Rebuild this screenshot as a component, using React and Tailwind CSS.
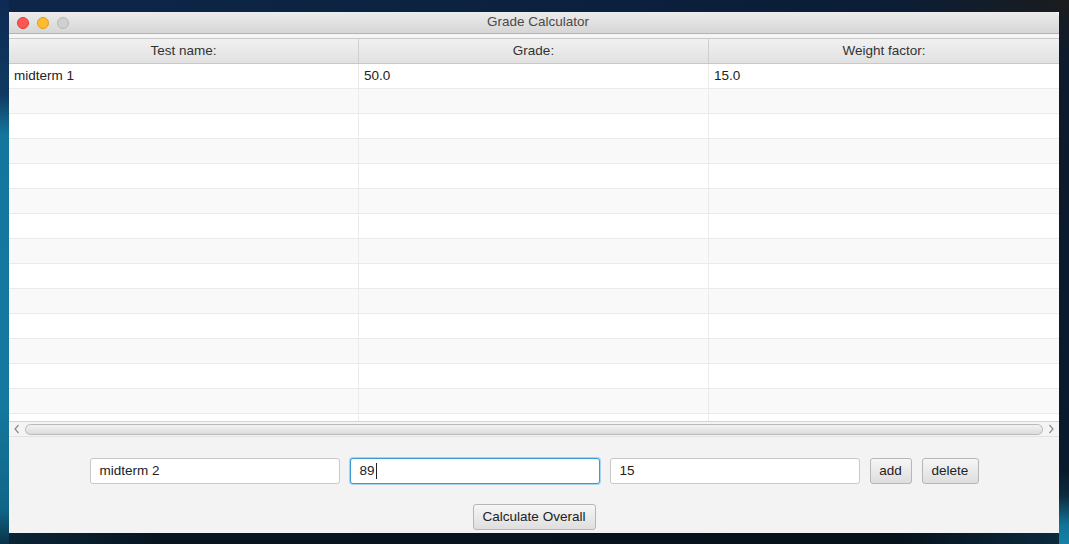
const ROWS = [
  ['midterm 1', '50.0', '15.0'],
  ...Array.from({ length: 14 }, () => ['', '', '']),
]

const HEADERS = ['Test name:', 'Grade:', 'Weight factor:']

function TextField({ value, focused }) {
  return (
    <div
      className={
        focused
          ? 'w-[250px] h-[26px] bg-white rounded-[3px] border border-[#3b99d6] shadow-[0_0_0_1px_#a9d3ef] flex items-center pl-[9px] text-[13.5px] text-[#222]'
          : 'w-[250px] h-[26px] bg-white rounded-[3px] border border-[#c9c9c9] flex items-center pl-[9px] text-[13.5px] text-[#222]'
      }
    >
      {value}
      {focused && <span className="w-px h-[16px] bg-[#222] ml-px" />}
    </div>
  )
}

function Button({ children, className = '' }) {
  return (
    <div
      className={`h-[26px] rounded-[3px] border border-[#b6b6b6] bg-[linear-gradient(to_bottom,#f6f6f6,#dedede)] flex items-center justify-center text-[13.5px] text-[#222] ${className}`}
    >
      {children}
    </div>
  )
}

export default function App() {
  return (
    <div className="w-[1069px] h-[544px] flex overflow-hidden font-['Liberation_Sans',Arial,sans-serif]">
      {/* desktop left strip */}
      <div className="w-[9px] h-full bg-[linear-gradient(to_bottom,#0e2a52_0px,#0f3a62_95px,#14769c_135px,#15799f_400px,#106587_510px,#0a3248_544px)]" />

      <div className="w-[1050px] flex flex-col">
        <div className="h-[12px] bg-[linear-gradient(to_right,#0d2648,#0b203d_60%,#0b1d35_85%,#1a1c20)]" />

        {/* window */}
        <div className="h-[521px] flex flex-col bg-[#f3f3f3] rounded-t-[5px] overflow-hidden">
          {/* title bar */}
          <div className="h-[22px] flex items-center border-b border-[#b3b3b3] bg-[linear-gradient(to_bottom,#ececec,#d6d6d6)]">
            <div className="flex items-center gap-[8px] pl-[8px]">
              <span className="w-[12px] h-[12px] rounded-full bg-[#fc5753] border border-[#df3d39]" />
              <span className="w-[12px] h-[12px] rounded-full bg-[#fdbc2e] border border-[#de9f1b]" />
              <span className="w-[12px] h-[12px] rounded-full bg-[#d0d0d0] border border-[#b8b8b8]" />
            </div>
            <div className="flex-1 text-center text-[13.5px] text-[#4a4a4a] pr-[52px]">Grade Calculator</div>
          </div>

          <div className="h-[4px] bg-[#f5f5f5]" />

          {/* table */}
          <div className="flex flex-col bg-white">
            <div className="flex h-[26px] border-y border-[#c8c8c8] bg-[linear-gradient(to_bottom,#f1f1f1,#e1e1e1)]">
              {HEADERS.map((h, i) => (
                <div
                  key={h}
                  className={`w-[350px] flex items-center justify-center text-[13.5px] text-[#333] ${i < 2 ? 'border-r border-[#cfcfcf]' : ''}`}
                >
                  {h}
                </div>
              ))}
            </div>

            <div className="h-[357px] overflow-hidden">
              {ROWS.map((row, r) => (
                <div
                  key={r}
                  className={`flex h-[25px] border-b border-[#ebebeb] ${r % 2 === 0 ? 'bg-white' : 'bg-[#f9f9f9]'}`}
                >
                  {row.map((c, i) => (
                    <div
                      key={i}
                      className={`w-[350px] flex items-center pl-[5px] text-[13.5px] text-[#222] ${i < 2 ? 'border-r border-[#ebebeb]' : ''}`}
                    >
                      {c}
                    </div>
                  ))}
                </div>
              ))}
            </div>

            {/* horizontal scrollbar */}
            <div className="h-[15px] flex items-center border-t border-[#d4d4d4] bg-[#f4f4f4]">
              <svg width="14" height="14" viewBox="0 0 14 14" className="ml-[1px]">
                <path d="M8.5 3 L5 7 L8.5 11" fill="none" stroke="#8a8a8a" strokeWidth="1.2" />
              </svg>
              <div className="flex-1 h-[11px] mx-[1px] rounded-full border border-[#b9b9b9] bg-[linear-gradient(to_bottom,#f2f2f2,#dcdcdc)]" />
              <svg width="14" height="14" viewBox="0 0 14 14" className="mr-[1px]">
                <path d="M5.5 3 L9 7 L5.5 11" fill="none" stroke="#8a8a8a" strokeWidth="1.2" />
              </svg>
            </div>
          </div>

          {/* input area */}
          <div className="flex-1 flex flex-col items-center pt-[21px] bg-[#f3f3f3] border-t border-[#e2e2e2]">
            <div className="flex items-center gap-[10px]">
              <TextField value="midterm 2" />
              <TextField value="89" focused />
              <TextField value="15" />
              <Button className="w-[42px]">add</Button>
              <Button className="w-[57px]">delete</Button>
            </div>
            <Button className="w-[123px] mt-[20px]">Calculate Overall</Button>
          </div>
        </div>

        <div className="flex-1 bg-[linear-gradient(to_right,#0a2436,#07141f_15%,#06111c_85%,#0b2a3e)]" />
      </div>

      {/* desktop right strip */}
      <div className="w-[10px] h-full bg-[linear-gradient(to_bottom,#1c1c1e_0px,#0d1b2c_60px,#0a1a2c_470px,#0b2a3e_495px,#137398_525px,#1582a8_544px)]" />
    </div>
  )
}
